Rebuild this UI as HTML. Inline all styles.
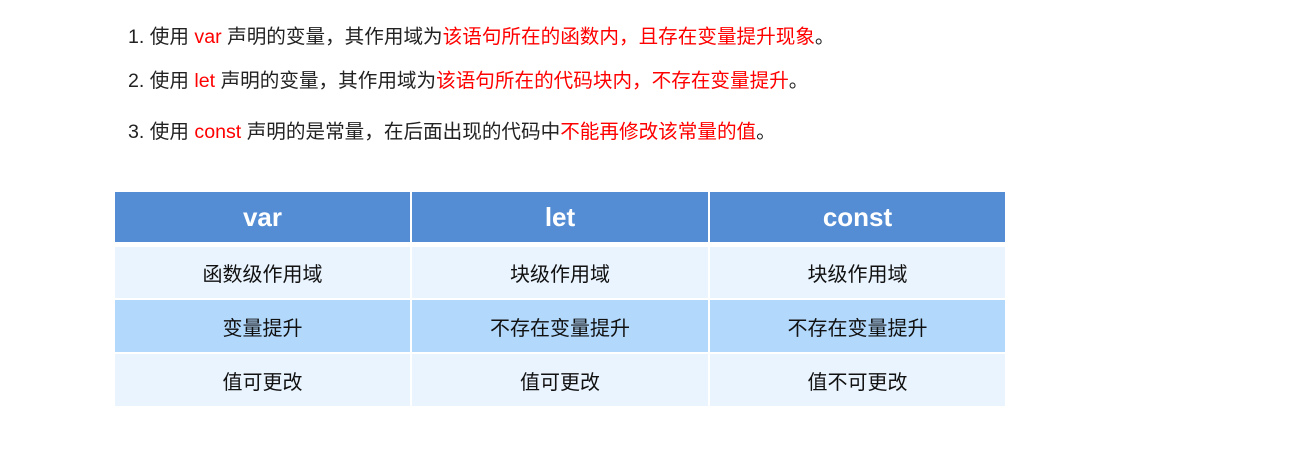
<!DOCTYPE html>
<html><head><meta charset="utf-8"><style>
body{margin:0;background:#fff;width:1295px;height:461px;overflow:hidden;font-family:"Liberation Sans","Noto Sans CJK SC",sans-serif;color:#222;}
.l{position:absolute;left:128px;font-size:19.6px;line-height:24px;white-space:nowrap;}
.r{color:#f00}
.c{position:absolute;display:flex;align-items:center;justify-content:center;font-size:20px;color:#111;}
.h{background:#548dd4;color:#fff;font-weight:bold;font-size:26px;}
.a{background:#eaf4fe}.b{background:#b2d8fb}
</style></head><body>
<div class="l" style="top:25px">1. 使用 <span class="r">var</span> 声明的变量，其作用域为<span class="r">该语句所在的函数内，且存在变量提升现象</span>。</div>
<div class="l" style="top:69px">2. 使用 <span class="r">let</span> 声明的变量，其作用域为<span class="r">该语句所在的代码块内，不存在变量提升</span>。</div>
<div class="l" style="top:120px">3. 使用 <span class="r">const</span> 声明的是常量，在后面出现的代码中<span class="r">不能再修改该常量的值</span>。</div>

<div class="c h" style="left:115px;top:192px;width:295px;height:50px">var</div>
<div class="c h" style="left:412px;top:192px;width:296px;height:50px">let</div>
<div class="c h" style="left:710px;top:192px;width:295px;height:50px">const</div>

<div class="c a" style="left:115px;top:247px;width:295px;height:51px">函数级作用域</div>
<div class="c a" style="left:412px;top:247px;width:296px;height:51px">块级作用域</div>
<div class="c a" style="left:710px;top:247px;width:295px;height:51px">块级作用域</div>

<div class="c b" style="left:115px;top:300px;width:295px;height:52px">变量提升</div>
<div class="c b" style="left:412px;top:300px;width:296px;height:52px">不存在变量提升</div>
<div class="c b" style="left:710px;top:300px;width:295px;height:52px">不存在变量提升</div>

<div class="c a" style="left:115px;top:354px;width:295px;height:52px">值可更改</div>
<div class="c a" style="left:412px;top:354px;width:296px;height:52px">值可更改</div>
<div class="c a" style="left:710px;top:354px;width:295px;height:52px">值不可更改</div>
</body></html>
